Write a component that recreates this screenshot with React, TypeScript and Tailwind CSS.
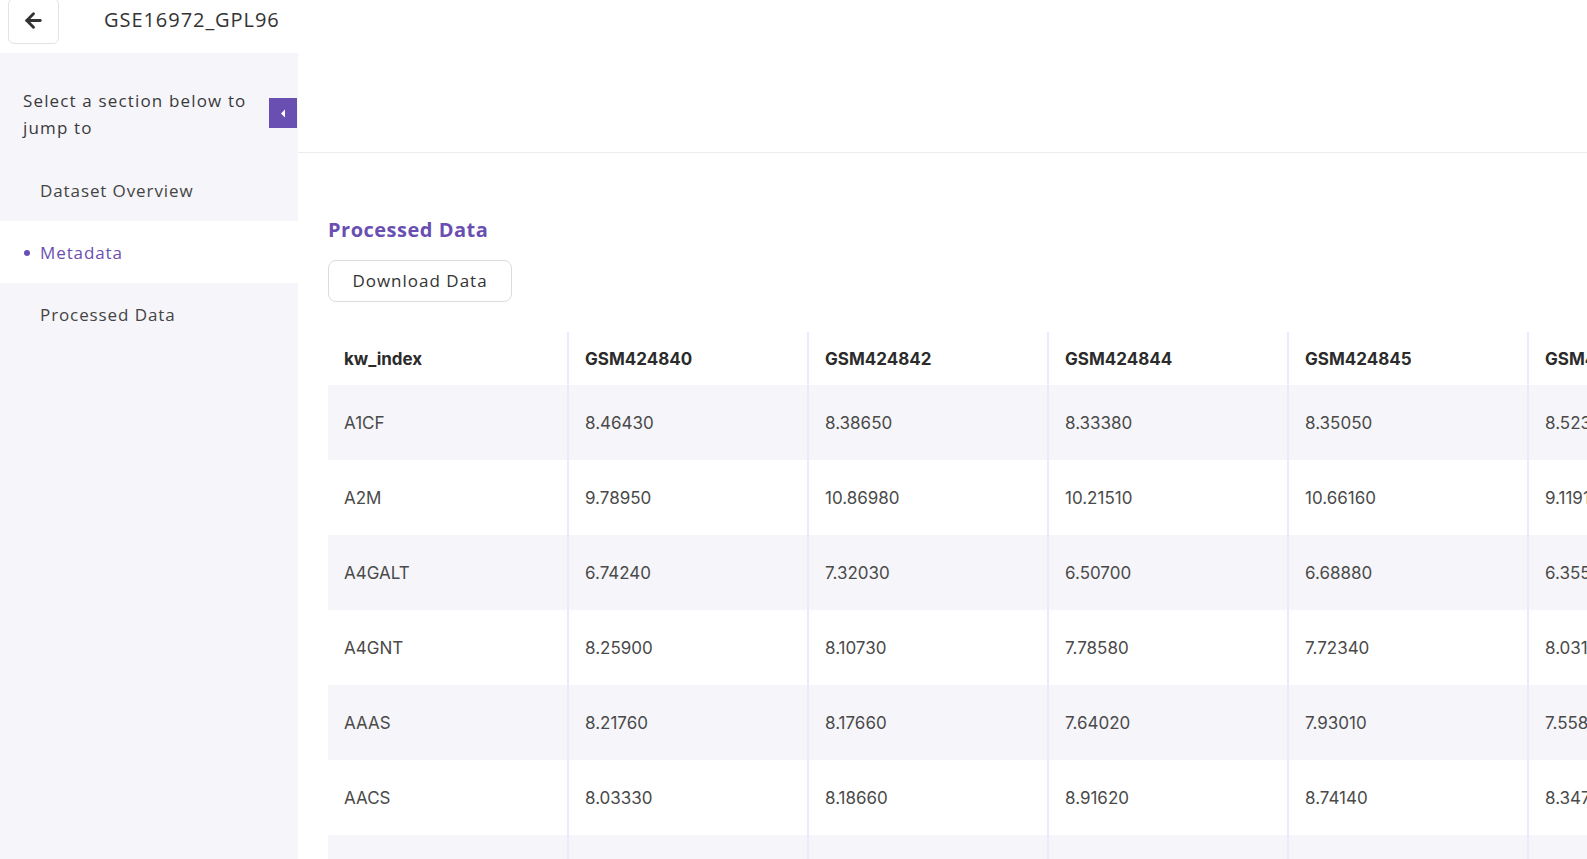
import { ArrowLeft } from "lucide-react";

const columns = ["kw_index", "GSM424840", "GSM424842", "GSM424844", "GSM424845", "GSM424846"];

const rows = [
  ["A1CF", "8.46430", "8.38650", "8.33380", "8.35050", "8.52340"],
  ["A2M", "9.78950", "10.86980", "10.21510", "10.66160", "9.11910"],
  ["A4GALT", "6.74240", "7.32030", "6.50700", "6.68880", "6.35580"],
  ["A4GNT", "8.25900", "8.10730", "7.78580", "7.72340", "8.03120"],
  ["AAAS", "8.21760", "8.17660", "7.64020", "7.93010", "7.55840"],
  ["AACS", "8.03330", "8.18660", "8.91620", "8.74140", "8.34790"],
  ["AADAC", "5.12070", "5.30410", "5.08820", "5.21960", "5.17730"],
];

const sections = [
  { label: "Dataset Overview", active: false },
  { label: "Metadata", active: true },
  { label: "Processed Data", active: false },
];

export default function App() {
  return (
    <div className="flex flex-col h-[859px] w-full overflow-hidden bg-white text-[#333] font-['Open_Sans',sans-serif]">
      {/* Top bar */}
      <div className="flex items-center h-[53px] shrink-0">
        <button className="ml-2 -mt-3 w-[51px] h-[46px] flex items-end justify-center pb-[11px] border border-[#e3e3e3] rounded-md bg-white">
          <ArrowLeft className="w-[23px] h-[23px] text-[#333]" strokeWidth={3} />
        </button>
        <h1 className="ml-[45px] -mt-[13px] text-[20px] tracking-[0.95px] text-[#333]">GSE16972_GPL96</h1>
      </div>

      <div className="flex flex-1 min-h-0">
        {/* Sidebar */}
        <aside className="w-[298px] shrink-0 bg-[#f5f5fa] flex flex-col">
          <div className="relative pt-[34px] pb-[18px] pl-[23px] pr-[32px]">
            <p className="text-[17px] leading-[27px] tracking-[1.15px] text-[#3a3a3a]">Select a section below to jump to</p>
            <button className="absolute right-[1px] top-[45px] w-[28px] h-[30px] bg-[#6a4fb3] flex items-center justify-center">
              <svg width="6" height="9" viewBox="0 0 6 9">
                <path d="M5 0.5 L1 4.5 L5 8.5 Z" fill="white" />
              </svg>
            </button>
          </div>
          {sections.map((s) => (
            <div
              key={s.label}
              className={`relative h-[62px] flex items-center pl-[40px] pt-[2px] text-[17px] tracking-[0.9px] ${
                s.active ? "bg-white text-[#6a4fb3]" : "text-[#444]"
              }`}
            >
              {s.active && <span className="absolute left-[24px] w-[6px] h-[6px] rounded-full bg-[#6a4fb3]" />}
              {s.label}
            </div>
          ))}
        </aside>

        {/* Main */}
        <main className="flex-1 min-w-0 overflow-hidden">
          <div className="h-[100px] border-b border-[#ececf0]" />
          <div className="pl-[30px] pt-[62px]">
            <h2 className="text-[20px] font-bold tracking-[0.5px] text-[#6a4fb3] leading-[30px]">Processed Data</h2>
            <button className="mt-[15px] w-[184px] h-[42px] border border-[#dcdcdc] rounded-lg text-[17px] tracking-[1px] text-[#333] bg-white">
              Download Data
            </button>
            <table className="mt-[30px] border-collapse table-fixed font-['Inter',sans-serif] text-[17px]">
              <thead>
                <tr className="h-[53px]">
                  {columns.map((c, i) => (
                    <th
                      key={c}
                      className={`w-[240px] min-w-[240px] text-left pl-4 pt-[2px] font-bold text-[#2b2b2b] ${
                        i > 0 ? "border-l-2 border-[#ebe9fb]" : ""
                      }`}
                    >
                      {c}
                    </th>
                  ))}
                </tr>
              </thead>
              <tbody>
                {rows.map((r, ri) => (
                  <tr key={r[0]} className={`h-[75px] ${ri % 2 === 0 ? "bg-[#f6f6fa]" : "bg-white"}`}>
                    {r.map((v, ci) => (
                      <td
                        key={ci}
                        className={`pl-4 pt-[3px] text-[#4a4a4a] whitespace-nowrap ${ci > 0 ? "border-l-2 border-[#ebe9fb]" : ""}`}
                      >
                        {v}
                      </td>
                    ))}
                  </tr>
                ))}
              </tbody>
            </table>
          </div>
        </main>
      </div>
    </div>
  );
}
